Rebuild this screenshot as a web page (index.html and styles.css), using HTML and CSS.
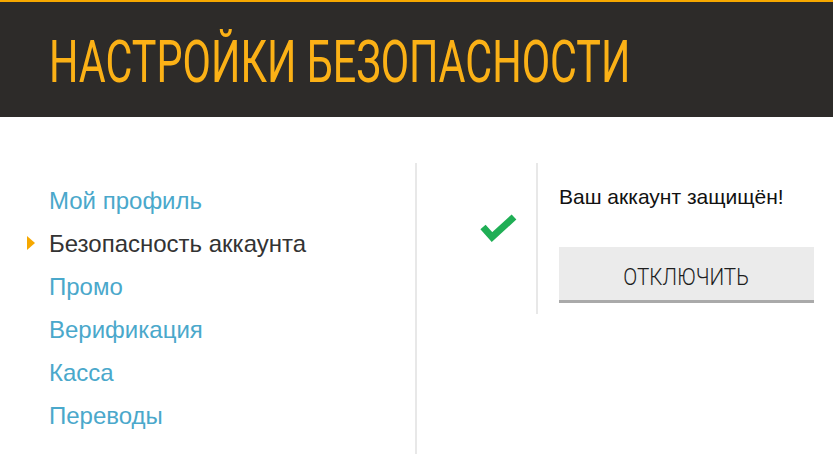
FILE: index.html
```html
<!DOCTYPE html>
<html>
<head>
    <meta charset="utf-8">
    <title>Настройки безопасности</title>
    <link rel="stylesheet" href="styles.css">
</head>
<body>
    <div class="header">
        <h1 class="title"><span>Настройки безопасности</span></h1>
    </div>

    <div class="main">
        <ul class="nav">
            <li><a href="#">Мой профиль</a></li>
            <li class="active"><a href="#">Безопасность аккаунта</a></li>
            <li><a href="#">Промо</a></li>
            <li><a href="#">Верификация</a></li>
            <li><a href="#">Касса</a></li>
            <li><a href="#">Переводы</a></li>
        </ul>

        <div class="panel">
            <div class="status">
                <svg class="check" width="37" height="29" viewBox="0 0 37 29">
                    <polyline points="3,14 12,24 34,4" fill="none" stroke="#1fae55" stroke-width="7" stroke-linecap="butt" stroke-linejoin="miter"/>
                </svg>
            </div>
            <div class="details">
                <p class="message">Ваш аккаунт защищён!</p>
                <button class="btn"><span>Отключить</span></button>
            </div>
        </div>
    </div>
</body>
</html>
```

FILE: styles.css
```css
body {
    margin: 0;
    font-family: "Liberation Sans", Arial, sans-serif;
    background: #fff;
    overflow-x: hidden;
}
.header {
    background: #2d2b29;
    border-top: 2px solid #f6a800;
    height: 115px;
    padding-left: 49px;
    display: flex;
    align-items: center;
    overflow: hidden;
}
.title {
    margin: 0;
    font-family: Roboto, sans-serif;
    font-weight: 400;
    font-size: 59px;
    line-height: 1;
    color: #fbb116;
    text-transform: uppercase;
    white-space: nowrap;
}
.title span {
    display: inline-block;
    transform: scaleX(0.7);
    transform-origin: left center;
    margin-top: 4px;
}
.main {
    display: flex;
    align-items: flex-start;
    padding-top: 46px;
}
.nav {
    list-style: none;
    margin: 0;
    width: 366px;
    padding: 16px 0 17px 49px;
    border-right: 2px solid #e8e8e8;
}
.nav li {
    position: relative;
    font-size: 24px;
    line-height: 43px;
}
.nav a {
    color: #4aa8cb;
    text-decoration: none;
}
.nav .active a {
    color: #333;
}
.nav .active::before {
    content: "";
    position: absolute;
    left: -22px;
    top: 14px;
    border-left: 8px solid #f6a800;
    border-top: 7px solid transparent;
    border-bottom: 7px solid transparent;
}
.panel {
    display: flex;
}
.status {
    width: 100px;
    padding: 50px 19px 0 0;
    border-right: 2px solid #e8e8e8;
    display: flex;
    justify-content: flex-end;
    align-items: flex-start;
}
.details {
    padding: 22px 0 11px 21px;
}
.message {
    margin: 0 0 38px;
    font-size: 21px;
    line-height: 24px;
    color: #111;
}
.btn {
    display: block;
    width: 255px;
    height: 56px;
    background: #ebebeb;
    border: none;
    border-bottom: 3px solid #aaa;
    font-family: Roboto, sans-serif;
    font-weight: 300;
    font-size: 24px;
    color: #1e1e1e;
    text-transform: uppercase;
    padding: 6px 0 0;
    cursor: pointer;
}
.btn span {
    display: inline-block;
    transform: scaleX(0.86);
}
.btn:hover {
    background: #e0e0e0;
}
```
